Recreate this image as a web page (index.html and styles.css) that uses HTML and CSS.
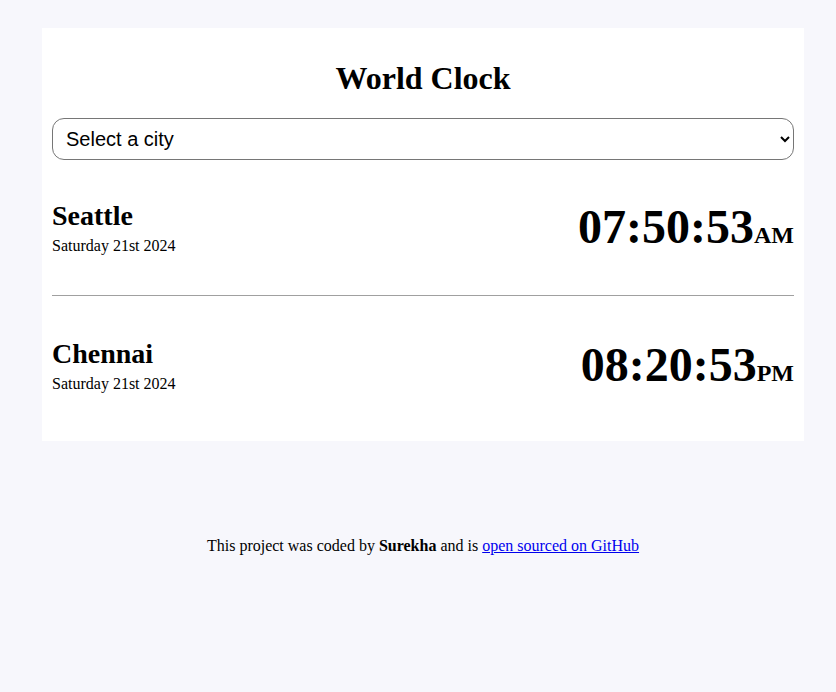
FILE: index.html
```html
<!DOCTYPE html>
<html lang="en">
<head>
<meta charset="utf-8">
<title>World Clock</title>
<link rel="stylesheet" href="styles.css">
</head>
<body>
<div class="wrapper">
  <div class="container">
    <h1 class="title">World Clock</h1>
    <select class="city-select">
      <option>Select a city</option>
      <option>Seattle</option>
      <option>Chennai</option>
    </select>
    <div class="cities">
      <div class="city">
        <div class="city-info">
          <h2 class="city-name">Seattle</h2>
          <div class="date">Saturday 21st 2024</div>
        </div>
        <div class="time">07:50:53<small class="ampm">AM</small></div>
      </div>
      <div class="city">
        <div class="city-info">
          <h2 class="city-name">Chennai</h2>
          <div class="date">Saturday 21st 2024</div>
        </div>
        <div class="time">08:20:53<small class="ampm">PM</small></div>
      </div>
    </div>
  </div>
  <footer class="footer">This project was coded by <strong>Surekha</strong> and is <a href="#" class="footer-link">open sourced on GitHub</a></footer>
</div>
</body>
</html>
```

FILE: styles.css
```css
html, body {
  margin: 0;
  padding: 0;
}

body {
  background: #f7f7fc;
  font-family: "Liberation Serif", "Times New Roman", serif;
  color: #000;
}

.wrapper {
  width: 762px;
  margin: 28px 0 0 42px;
}

.container {
  background: #ffffff;
  padding: 10px;
}

.title {
  font-size: 32px;
  font-weight: bold;
  text-align: center;
  margin: 23px 0 22px;
  line-height: 35px;
}

.city-select {
  display: block;
  width: 100%;
  height: 42px;
  font-family: "Liberation Sans", Arial, sans-serif;
  font-size: 20px;
  color: #000;
  background: #fff;
  border: 1px solid #767676;
  border-radius: 12px;
  padding: 0 9px;
  margin: 0;
}

.city {
  display: flex;
  justify-content: space-between;
  align-items: center;
  padding: 42px 0 40px;
  border-bottom: 1px solid #a0a0a0;
}

.city:first-child {
  padding-top: 40px;
}

.city:last-child {
  border-bottom: none;
  padding-bottom: 38px;
}

.city-name {
  font-size: 28px;
  font-weight: bold;
  line-height: 31px;
  margin: 0 0 6px;
}

.date {
  font-size: 16px;
  line-height: 18px;
}

.time {
  font-size: 48px;
  font-weight: bold;
  line-height: 53px;
  margin-top: -2px;
}

.ampm {
  font-size: 24px;
  line-height: 1;
}

.footer {
  margin-top: 96px;
  text-align: center;
  font-size: 16px;
  line-height: 18px;
}

.footer-link {
  color: #0000ee;
}
```
